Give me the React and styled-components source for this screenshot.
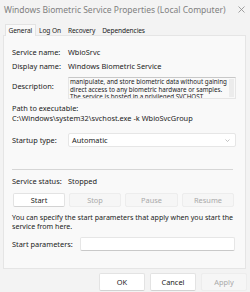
import React from "react";
import styled, { createGlobalStyle } from "styled-components";

const Global = createGlobalStyle`
  html, body { margin: 0; padding: 0; background: #f3f3f3; }
  body { font-family: "Noto Sans", "Liberation Sans", sans-serif; }
`;

const Window = styled.div`
  width: 250px;
  height: 292px;
  box-sizing: border-box;
  background: #f3f3f3;
  display: flex;
  flex-direction: column;
  overflow: hidden;
  font-size: 7.4px;
  color: #1b1b1b;
`;

const TitleBar = styled.div`
  height: 19px;
  display: flex;
  align-items: center;
  justify-content: space-between;
  padding: 0 5px 0 4px;
`;

const Title = styled.span`
  font-size: 8.5px;
  color: #808080;
  white-space: nowrap;
`;

const TabStrip = styled.div`
  display: flex;
  align-items: flex-end;
  height: 12px;
  margin-top: 4px;
  padding-left: 5px;
`;

const Tab = styled.div`
  height: 12px;
  box-sizing: border-box;
  display: flex;
  align-items: center;
  padding: 0 2.5px;
  font-size: 6.6px;
  letter-spacing: -0.1px;
  white-space: nowrap;
  background: ${(p) => (p.$active ? "#f9f9f9" : "transparent")};
  border: 1px solid ${(p) => (p.$active ? "#e3e3e3" : "transparent")};
  border-bottom: none;
  margin-bottom: -1px;
  position: relative;
  z-index: 1;
`;

const Panel = styled.div`
  margin: 0 4px 0 3px;
  height: 234px;
  box-sizing: border-box;
  background: #f9f9f9;
  border: 1px solid #e5e5e5;
  padding: 11px 0 0 8px;
  display: flex;
  flex-direction: column;
`;

const Row = styled.div`
  display: flex;
  align-items: ${(p) => p.$align || "center"};
  height: ${(p) => p.$h || 10}px;
  margin-top: ${(p) => p.$mt || 0}px;
`;

const Label = styled.div`
  width: ${(p) => p.$w || 56}px;
  flex: none;
  white-space: nowrap;
  padding-top: ${(p) => p.$pt || 0}px;
`;

const Value = styled.div`
  white-space: nowrap;
`;

const Line = styled.div`
  height: 10px;
  line-height: 10px;
  white-space: nowrap;
  margin-top: ${(p) => p.$mt || 0}px;
`;

const DescBox = styled.div`
  width: 168px;
  height: 22px;
  box-sizing: border-box;
  border: 1px solid #e6e6e6;
  border-top-color: #c8c8c8;
  background: #f9f9f9;
  display: flex;
  overflow: hidden;
`;

const DescText = styled.div`
  flex: 1;
  padding: 0 0 0 1px;
  line-height: 7.6px;
  font-size: 6.25px;
  white-space: nowrap;
  overflow: hidden;
`;

const ScrollTrack = styled.div`
  width: 5px;
  flex: none;
  background: #ececec;
  margin: 1px 1px 1px 0;
`;

const Select = styled.div`
  width: 168px;
  height: 14px;
  box-sizing: border-box;
  background: #ffffff;
  border: 1px solid #e6e6e6;
  border-radius: 2px;
  display: flex;
  align-items: center;
  justify-content: space-between;
  padding: 0 5px 0 3px;
`;

const Separator = styled.div`
  height: 1px;
  width: 221px;
  background: #d6d6d6;
  margin-top: 22px;
`;

const ButtonRow = styled.div`
  display: flex;
  gap: 4px;
  margin-top: 7px;
  padding-left: 1px;
`;

const Btn = styled.div`
  height: ${(p) => p.$h || 14}px;
  width: ${(p) => p.$w}px;
  box-sizing: border-box;
  display: flex;
  align-items: center;
  justify-content: center;
  border-radius: 2px;
  background: ${(p) => (p.$disabled ? "#f6f6f6" : "#ffffff")};
  border: 1px solid ${(p) => (p.$disabled ? "#ededed" : "#e3e3e3")};
  border-bottom-color: ${(p) => (p.$disabled ? "#ededed" : "#d2d2d2")};
  color: ${(p) => (p.$disabled ? "#a9a9a9" : "#1b1b1b")};
  white-space: nowrap;
`;

const Info = styled.div`
  margin-top: 6px;
  line-height: 8.6px;
  width: 233px;
  font-size: 7.1px;
`;

const Input = styled.div`
  width: 155px;
  height: 14px;
  box-sizing: border-box;
  background: #ffffff;
  border: 1px solid #e6e6e6;
  border-bottom-color: #c9c9c9;
  border-radius: 2px;
`;

const Footer = styled.div`
  display: flex;
  justify-content: flex-end;
  gap: 5px;
  padding: 4px 3px 0 0;
`;

const CloseIcon = () => (
  <svg width="7" height="7" viewBox="0 0 7 7">
    <path d="M0.5 0.5 L6.5 6.5 M6.5 0.5 L0.5 6.5" stroke="#8a8a8a" strokeWidth="0.8" />
  </svg>
);

const Chevron = () => (
  <svg width="5" height="3" viewBox="0 0 5 3">
    <path d="M0.5 0.5 L2.5 2.5 L4.5 0.5" stroke="#9a9a9a" strokeWidth="0.6" fill="none" />
  </svg>
);

export default function App() {
  return (
    <>
      <Global />
      <Window>
        <TitleBar>
          <Title>Windows Biometric Service Properties (Local Computer)</Title>
          <CloseIcon />
        </TitleBar>
        <TabStrip>
          <Tab $active>General</Tab>
          <Tab>Log On</Tab>
          <Tab>Recovery</Tab>
          <Tab>Dependencies</Tab>
        </TabStrip>
        <Panel>
          <Row>
            <Label>Service name:</Label>
            <Value>WbioSrvc</Value>
          </Row>
          <Row $mt={4}>
            <Label>Display name:</Label>
            <Value>Windows Biometric Service</Value>
          </Row>
          <Row $mt={6} $h={22} $align="flex-start">
            <Label $pt={4}>Description:</Label>
            <DescBox>
              <DescText>
                manipulate, and store biometric data without gaining
                <br />
                direct access to any biometric hardware or samples.
                <br />
                The service is hosted in a privileged SVCHOST
              </DescText>
              <ScrollTrack />
            </DescBox>
          </Row>
          <Line $mt={4}>Path to executable:</Line>
          <Line>C:\Windows\system32\svchost.exe -k WbioSvcGroup</Line>
          <Row $mt={10} $h={14}>
            <Label>Startup type:</Label>
            <Select>
              <span>Automatic</span>
              <Chevron />
            </Select>
          </Row>
          <Separator />
          <Row $mt={6}>
            <Label>Service status:</Label>
            <Value>Stopped</Value>
          </Row>
          <ButtonRow>
            <Btn $w={52}>Start</Btn>
            <Btn $w={52} $disabled>Stop</Btn>
            <Btn $w={53} $disabled>Pause</Btn>
            <Btn $w={52} $disabled>Resume</Btn>
          </ButtonRow>
          <Info>
            You can specify the start parameters that apply when you start the service from here.
          </Info>
          <Row $mt={7} $h={14}>
            <Label $w={68}>Start parameters:</Label>
            <Input />
          </Row>
        </Panel>
        <Footer>
          <Btn $w={46} $h={18}>OK</Btn>
          <Btn $w={46} $h={18}>Cancel</Btn>
          <Btn $w={46} $h={18} $disabled>Apply</Btn>
        </Footer>
      </Window>
    </>
  );
}
